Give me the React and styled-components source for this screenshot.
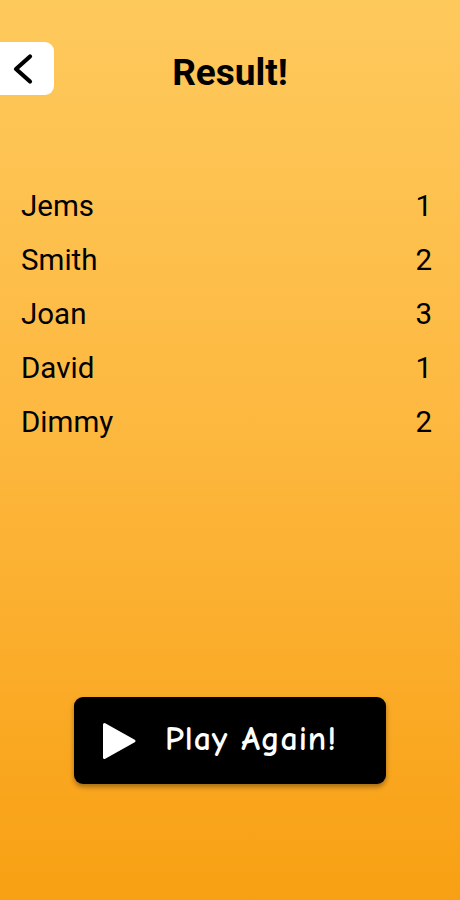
import React from "react";
import styled, { createGlobalStyle } from "styled-components";

const Global = createGlobalStyle`
  html, body { margin: 0; padding: 0; }
  body { font-family: Roboto, "Noto Sans", sans-serif; }
  * { box-sizing: border-box; }
`;

const Page = styled.div`
  width: 460px;
  min-height: 900px;
  display: flex;
  flex-direction: column;
  background: linear-gradient(180deg, #fec95c 0%, #fdb941 45%, #f8a013 100%);
  padding: 42px 0 116px;
`;

const Header = styled.header`
  display: grid;
  grid-template-columns: 54px 1fr 54px;
  align-items: center;
  height: 53px;
`;

const BackButton = styled.button`
  width: 54px;
  height: 53px;
  border: none;
  padding: 0 0 0 8px;
  background: #ffffff;
  border-radius: 0 9px 9px 0;
  display: flex;
  align-items: center;
  justify-content: flex-start;
  cursor: pointer;
`;

const Title = styled.h1`
  margin: 0;
  text-align: center;
  font-family: Roboto, sans-serif;
  font-weight: 700;
  font-size: 37px;
  line-height: 1;
  color: #000;
  padding-top: 8px;
`;

const List = styled.ul`
  list-style: none;
  margin: 84px 0 0;
  padding: 0 28px 0 21px;
`;

const Row = styled.li`
  display: flex;
  justify-content: space-between;
  align-items: center;
  height: 54px;
  font-size: 29.5px;
  line-height: 54px;
  color: #000;
`;

const Footer = styled.div`
  margin-top: auto;
  display: flex;
  justify-content: center;
`;

const PlayButton = styled.button`
  width: 312px;
  height: 87px;
  border: none;
  border-radius: 9px;
  background: #000;
  box-shadow: 0 3px 5px rgba(0, 0, 0, 0.35);
  display: flex;
  align-items: center;
  padding: 0 0 0 27px;
  gap: 28px;
  cursor: pointer;
`;

const PlayLabel = styled.span`
  font-family: "Comic Sans MS", "Comic Neue", "Open Sans", sans-serif;
  font-weight: 700;
  font-size: 34px;
  color: #fff;
  letter-spacing: 0.9px;
  padding-bottom: 4px;
`;

const players = [
  ["Jems", 1],
  ["Smith", 2],
  ["Joan", 3],
  ["David", 1],
  ["Dimmy", 2],
];

export default function App() {
  return (
    <>
      <Global />
      <Page>
        <Header>
          <BackButton aria-label="Back">
            <svg width="26" height="34" viewBox="0 0 26 34">
              <path d="M22 4.5 L8 17 L22 29.5" fill="none" stroke="#000" strokeWidth="4.2" strokeLinecap="round" strokeLinejoin="round" />
            </svg>
          </BackButton>
          <Title>Result!</Title>
          <span />
        </Header>
        <List>
          {players.map(([name, score]) => (
            <Row key={name}>
              <span>{name}</span>
              <span>{score}</span>
            </Row>
          ))}
        </List>
        <Footer>
          <PlayButton>
            <svg width="36" height="38" viewBox="0 0 36 38">
              <path d="M3.5 2.5 L33 19 L3.5 35.5 Z" fill="#fff" stroke="#fff" strokeWidth="3" strokeLinejoin="round" />
            </svg>
            <PlayLabel>Play Again!</PlayLabel>
          </PlayButton>
        </Footer>
      </Page>
    </>
  );
}
